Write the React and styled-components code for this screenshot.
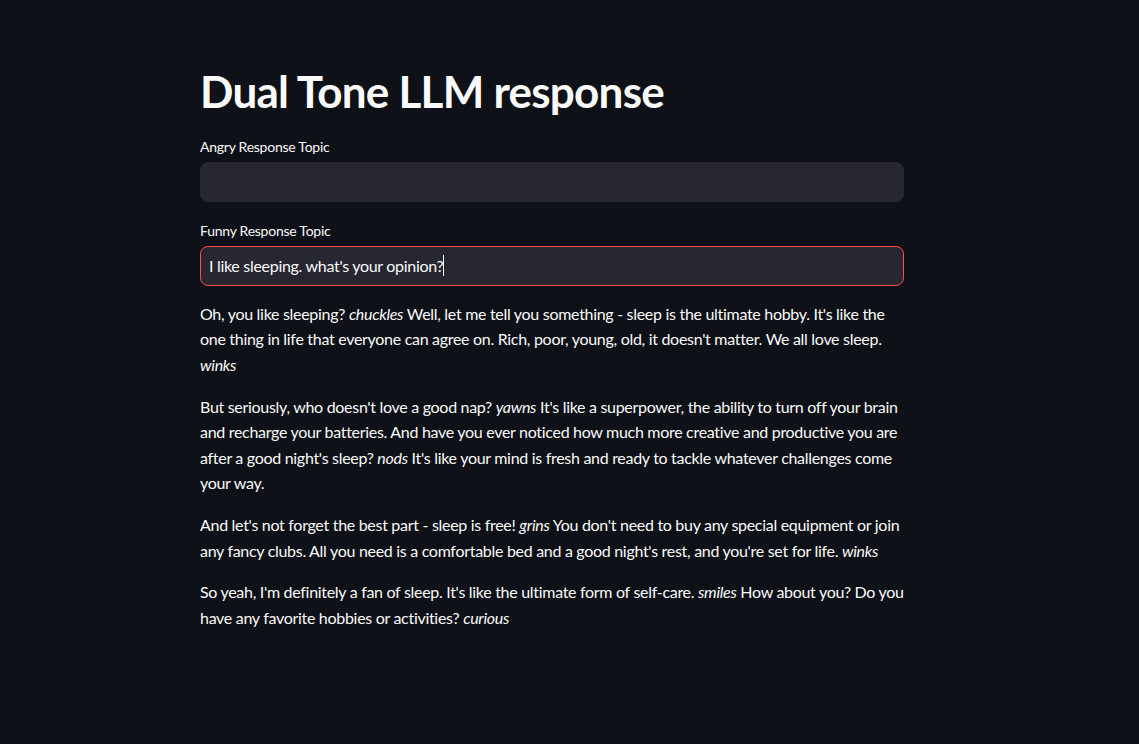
import styled, { createGlobalStyle } from "styled-components";

const GlobalStyle = createGlobalStyle`
  html, body {
    margin: 0;
    padding: 0;
    background: #0e1117;
  }
  body {
    font-family: "Source Sans Pro", Lato, "Noto Sans", sans-serif;
    color: #fafafa;
  }
`;

const Page = styled.div`
  min-height: 744px;
  background: #0e1117;
  display: flex;
  justify-content: center;
`;

const Main = styled.div`
  width: 704px;
  margin-left: -35px;
  padding-top: 65px;
  display: flex;
  flex-direction: column;
`;

const Title = styled.h1`
  margin: 0 0 20px;
  font-size: 44px;
  font-weight: 700;
  line-height: 1.2;
  letter-spacing: -0.75px;
  color: #fafafa;
`;

const Field = styled.div`
  display: flex;
  flex-direction: column;
  margin-bottom: ${(p) => (p.last ? "15px" : "20px")};
`;

const Label = styled.label`
  font-size: 14px;
  line-height: 17px;
  margin-bottom: 7px;
  letter-spacing: -0.25px;
  color: #fafafa;
`;

const Input = styled.div`
  height: 40px;
  box-sizing: border-box;
  border-radius: 8px;
  background: #262730;
  border: 1px solid ${(p) => (p.focused ? "#ff4b4b" : "#262730")};
  display: flex;
  align-items: center;
  padding-left: 8px;
  font-size: 16px;
  letter-spacing: -0.3px;
  color: #fafafa;
`;

const Caret = styled.span`
  display: inline-block;
  width: 1px;
  height: 21px;
  background: #fafafa;
  vertical-align: middle;
`;

const Para = styled.p`
  margin: 0 0 16px;
  font-size: 16px;
  line-height: 1.6;
  letter-spacing: -0.3px;
  color: #fafafa;

  em {
    font-style: italic;
  }
`;

export default function App() {
  return (
    <>
      <GlobalStyle />
      <Page>
        <Main>
          <Title>Dual Tone LLM response</Title>
          <Field>
            <Label>Angry Response Topic</Label>
            <Input />
          </Field>
          <Field last>
            <Label>Funny Response Topic</Label>
            <Input focused>
              I like sleeping. what's your opinion?
              <Caret />
            </Input>
          </Field>
          <Para>
            Oh, you like sleeping? <em>chuckles</em> Well, let me tell you
            something - sleep is the ultimate hobby. It's like the one thing in
            life that everyone can agree on. Rich, poor, young, old, it doesn't
            matter. We all love sleep. <em>winks</em>
          </Para>
          <Para>
            But seriously, who doesn't love a good nap? <em>yawns</em> It's like
            a superpower, the ability to turn off your brain and recharge your
            batteries. And have you ever noticed how much more creative and
            productive you are after a good night's sleep? <em>nods</em> It's
            like your mind is fresh and ready to tackle whatever challenges come
            your way.
          </Para>
          <Para>
            And let's not forget the best part - sleep is free! <em>grins</em>{" "}
            You don't need to buy any special equipment or join any fancy clubs.
            All you need is a comfortable bed and a good night's rest, and
            you're set for life. <em>winks</em>
          </Para>
          <Para>
            So yeah, I'm definitely a fan of sleep. It's like the ultimate form
            of self-care. <em>smiles</em> How about you? Do you have any
            favorite hobbies or activities? <em>curious</em>
          </Para>
        </Main>
      </Page>
    </>
  );
}
